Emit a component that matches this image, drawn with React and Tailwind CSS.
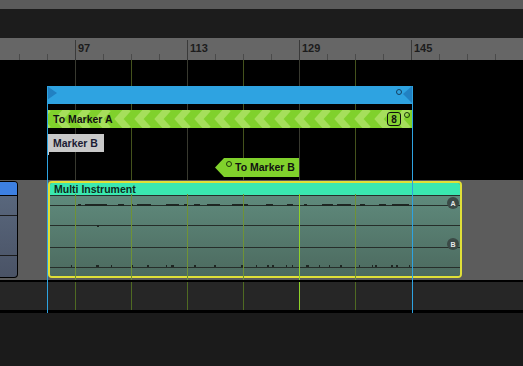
import React from 'react';

const font = "font-['Liberation_Sans',Arial,sans-serif]";

const majorTicks = [75, 187, 299, 411];
const minorTicks = [19, 47, 103, 131, 159, 215, 243, 271, 327, 355, 383, 439, 467, 495];
const rulerLabels = [
  { x: 75, label: '97' },
  { x: 187, label: '113' },
  { x: 299, label: '129' },
  { x: 411, label: '145' },
];

// beat grid inside the loop range
const beatLines = [75, 131, 187, 243, 299, 355];

const topNotes = [
  [77, 3], [84, 22], [117, 6], [130, 2], [136, 14], [165, 13], [183, 3], [193, 6],
  [206, 13], [231, 16], [265, 7], [286, 6], [303, 3], [321, 11], [336, 14], [359, 5],
  [378, 7], [391, 17],
];
const bottomNotes = [
  [70, 1], [95, 3], [110, 1], [130, 2], [146, 2], [165, 1], [170, 3], [193, 2], [213, 2],
  [240, 3], [255, 1], [266, 2], [271, 2], [285, 1], [291, 1], [305, 3], [318, 1], [328, 1],
  [339, 2], [358, 1], [371, 1], [374, 2], [390, 2], [395, 2], [408, 1],
];

function VLines({ xs, className, top = 0, bottom = 0 }) {
  return xs.map((x) => (
    <div
      key={x}
      className={`absolute w-px ${className}`}
      style={{ left: x, top, bottom }}
    />
  ));
}

function Ruler() {
  return (
    <div className="relative h-[22px] bg-[#666666] shrink-0">
      {majorTicks.map((x) => (
        <div key={x} className="absolute top-[2px] bottom-0 w-px bg-[#3a3a3a]" style={{ left: x }} />
      ))}
      {minorTicks.map((x) => (
        <div key={x} className="absolute bottom-0 h-[6px] w-px bg-[#4a4a4a]" style={{ left: x }} />
      ))}
      {rulerLabels.map((l) => (
        <span
          key={l.x}
          className={`absolute top-[3px] text-[11px] font-bold leading-[14px] text-[#1c1c1c] ${font}`}
          style={{ left: l.x + 3 }}
        >
          {l.label}
        </span>
      ))}
    </div>
  );
}

function Ring({ className = '' }) {
  return <span className={`inline-block w-[6px] h-[6px] rounded-full border border-current ${className}`} />;
}

function MarkerLane() {
  return (
    <div className="relative h-[120px] bg-black pt-[26px] shrink-0">
      <VLines xs={[75, 187, 299]} className="bg-[#38392f]" />
      <VLines xs={[131, 243, 355]} className="bg-[#44521c]" />

      {/* arranger loop bar */}
      <div className="relative ml-[47px] w-[365px] h-[18px] bg-[#2ea3e1]">
        <svg className="absolute left-0 top-0" width="10" height="18" viewBox="0 0 10 18">
          <polygon points="0,0 10,7 0,14" fill="#2181c2" />
        </svg>
        <svg className="absolute right-0 top-0" width="10" height="18" viewBox="0 0 10 18">
          <polygon points="10,0 1,8 10,17" fill="#2181c2" />
        </svg>
        <Ring className="absolute left-[349px] top-[3px] text-[#163f60]" />
      </div>

      {/* To Marker A */}
      <div className="relative ml-[47px] mt-[6px] w-[365px] h-[18px] bg-[#80d12c] overflow-hidden">
        <svg className="absolute inset-0" width="365" height="18">
          <defs>
            <pattern id="chev" width="20" height="18" patternUnits="userSpaceOnUse" x="6">
              <polyline points="15,-1 6,9 15,19" fill="none" stroke="#a6df5c" strokeWidth="7" />
            </pattern>
          </defs>
          <rect x="0" y="0" width="365" height="18" fill="url(#chev)" />
        </svg>
        <span className={`absolute left-[6px] top-[2px] whitespace-nowrap text-[10.5px] font-bold leading-[14px] text-[#111] ${font}`}>
          To Marker A
        </span>
        <span
          className={`absolute left-[340px] top-[2px] w-[14px] h-[14px] rounded-[3px] border border-[#111] flex items-center justify-center text-[10px] font-bold text-[#111] bg-[#86d233] ${font}`}
        >
          8
        </span>
        <Ring className="absolute left-[357px] top-[2px] text-[#1d3a0a]" />
      </div>

      {/* Marker B */}
      <div className="relative ml-[47px] mt-[6px] w-[57px] h-[18px] bg-[#c9c9c9]">
        <span className={`absolute left-[6px] top-[2px] whitespace-nowrap text-[10.5px] font-bold leading-[14px] text-[#1b1b33] ${font}`}>
          Marker B
        </span>
        <div className="absolute left-0 top-[18px] w-[2px] h-[3px] bg-[#c9c9c9]" />
      </div>

      {/* To Marker B */}
      <div className="relative ml-[215px] mt-[6px] w-[84px] h-[19px] flex">
        <svg width="9" height="19" viewBox="0 0 9 19" className="shrink-0">
          <polygon points="9,0 0,9.5 9,19" fill="#80d12c" />
        </svg>
        <div className="relative flex-1 bg-[#80d12c]">
          <Ring className="absolute left-[2px] top-[3px] text-[#1d3a0a]" />
          <span className={`absolute left-[11px] top-[2px] whitespace-nowrap text-[10.5px] font-bold leading-[14px] text-[#111] ${font}`}>
            To Marker B
          </span>
        </div>
      </div>
    </div>
  );
}

function Badge({ children }) {
  return (
    <span
      className={`w-[12px] h-[12px] rounded-full bg-[#3b4a46] flex items-center justify-center text-[7px] font-bold leading-none text-[#e8e8e8] ${font}`}
    >
      {children}
    </span>
  );
}

function Clip() {
  return (
    <div className="relative ml-[30px] w-[414px] h-[97px] rounded-[4px] border-2 border-[#e0e038] overflow-hidden flex flex-col">
      <div className={`h-[12px] bg-[#3ae8b0] pl-[4px] whitespace-nowrap text-[10.5px] font-bold leading-[12px] text-[#0d2a20] ${font}`}>
        Multi Instrument
      </div>
      <div className="relative flex-1 flex flex-col bg-gradient-to-b from-[#5f8a7c] to-[#4c6a5f]">
        <div className="h-[10px] border-t border-[#262e2a]" />
        <div className="h-[20px] border-t border-[#262e2a]" />
        <div className="h-[22px] border-t border-[#262e2a]" />
        <div className="h-[20px] border-t border-[#262e2a]" />
        <div className="flex-1 border-t border-[#262e2a]" />
        <svg className="absolute inset-0" width="410" height="83">
          {topNotes.map(([x, w]) => (
            <rect key={x} x={x - 49} y={9} width={w} height={2} fill="#1e2622" />
          ))}
          <rect x={96 - 49} y={30} width={2} height={2} fill="#1e2622" />
          {bottomNotes.map(([x, w]) => (
            <rect key={x} x={x - 49} y={70} width={w} height={2} fill="#1e2622" />
          ))}
        </svg>
        <div className="absolute right-[1px] top-[2px] flex flex-col gap-[29px]">
          <Badge>A</Badge>
          <Badge>B</Badge>
        </div>
      </div>
    </div>
  );
}

function TrackLane() {
  return (
    <div className="relative h-[100px] bg-[#5c5c5c] pt-[1px] flex shrink-0">
      <div className="w-[18px] h-[97px] rounded-r-[4px] border border-l-0 border-black overflow-hidden flex flex-col bg-gradient-to-b from-[#5b6a80] to-[#4a5366]">
        <div className="h-[14px] bg-[#3d80e2] border-b border-black" />
        <div className="h-[20px] border-b border-[#1b1b1b]" />
        <div className="h-[40px] border-b border-[#1b1b1b]" />
        <div className="flex-1" />
      </div>
      <Clip />
      <VLines xs={[75, 131, 187, 243, 355]} className="bg-[#6f9236]" top={14} />
      <VLines xs={[299]} className="bg-[#8fd12a]" top={14} />
    </div>
  );
}

export default function App() {
  return (
    <div className="w-[523px] h-[366px] overflow-hidden flex flex-col bg-[#1b1b1b]">
      <div className="h-[9px] bg-[#5b5b5b] shrink-0" />
      <div className="h-[29px] bg-[#1c1c1c] shrink-0" />
      <Ruler />

      <div className="relative flex flex-col shrink-0">
        <MarkerLane />
        <TrackLane />
        <div className="h-[2px] bg-black" />
        <div className="relative h-[28px] bg-[#262626]">
          <VLines xs={beatLines.filter((x) => x !== 299)} className="bg-[#4f6a22]" />
          <VLines xs={[299]} className="bg-[#8fd12a]" />
        </div>
        <div className="h-[3px] bg-black" />

        {/* loop range edges */}
        <VLines xs={[47, 412]} className="bg-[#2ea3e1] z-10" top={26} />
      </div>

      <div className="flex-1 bg-[#1b1b1b]" />
    </div>
  );
}
